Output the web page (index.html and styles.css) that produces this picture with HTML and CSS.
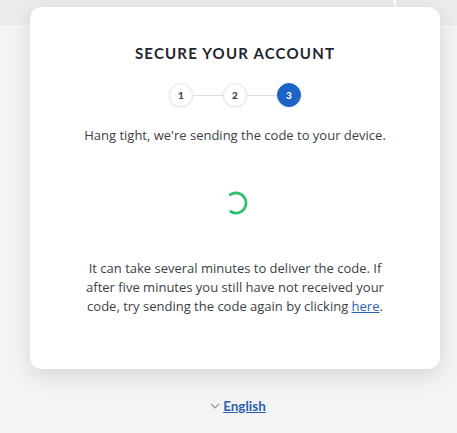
FILE: index.html
```html
<!DOCTYPE html>
<html lang="en">
<head>
<meta charset="utf-8">
<title>Secure your account</title>
<link rel="stylesheet" href="styles.css">
</head>
<body>
<main class="page">
  <section class="card">
    <h1 class="title">SECURE YOUR ACCOUNT</h1>
    <ol class="steps">
      <li class="step">1</li>
      <li class="line"></li>
      <li class="step">2</li>
      <li class="line"></li>
      <li class="step active">3</li>
    </ol>
    <p class="lead">Hang tight, we're sending the code to your device.</p>
    <div class="spinner">
      <svg width="26" height="26" viewBox="0 0 26 26">
        <circle cx="13" cy="13" r="10" fill="none" stroke="#2fbf6f" stroke-width="2.8" stroke-linecap="round" stroke-dasharray="42.6 100" transform="rotate(-124 13 13)"/>
      </svg>
    </div>
    <p class="note">It can take several minutes to deliver the code. If after five minutes you still have not received your code, try sending the code again by clicking <a href="#" class="link">here</a>.</p>
  </section>
  <div class="lang">
    <svg class="chev" width="10" height="6" viewBox="0 0 10 6"><path d="M1 1 L5 5 L9 1" fill="none" stroke="#9a9a9a" stroke-width="1.2"/></svg>
    <a href="#" class="lang-link">English</a>
  </div>
</main>
</body>
</html>
```

FILE: styles.css
```css
html, body {
  margin: 0;
  padding: 0;
}
body {
  width: 457px;
  height: 433px;
  overflow: hidden;
  background:
    linear-gradient(#ffffff, #ffffff) 394px 0 / 2px 25px no-repeat,
    linear-gradient(#ececec, #ececec) 0 0 / 100% 25px no-repeat,
    #f4f4f4;
  font-family: "Open Sans", "Liberation Sans", sans-serif;
}
.page {
  display: flex;
  flex-direction: column;
  align-items: center;
}
.card {
  margin-top: 7px;
  margin-left: 13px;
  width: 410px;
  box-sizing: border-box;
  padding: 35px 20px 53px;
  background: #ffffff;
  border-radius: 12px;
  box-shadow: 0 6px 22px rgba(0, 0, 0, 0.13);
  display: flex;
  flex-direction: column;
  align-items: center;
}
.title {
  margin: 0;
  font-family: "Lato", "Liberation Sans", sans-serif;
  font-weight: 700;
  font-size: 15px;
  line-height: 22px;
  letter-spacing: 1.2px;
  color: #1f2631;
}
.steps {
  list-style: none;
  margin: 19px 0 0;
  padding: 0;
  display: flex;
  align-items: center;
}
.step {
  width: 22px;
  height: 22px;
  border-radius: 50%;
  background: #fff;
  border: 1px solid #e6e6e6;
  box-shadow: 0 1px 3px rgba(0,0,0,0.08);
  display: flex;
  align-items: center;
  justify-content: center;
  font-family: "Lato", "Liberation Sans", sans-serif;
  font-weight: 900;
  font-size: 10px;
  color: #444;
}
.step.active {
  background: #1e64c8;
  border-color: #1e64c8;
  color: #fff;
}
.line {
  width: 30px;
  height: 1px;
  background: #dedede;
}
.lead {
  margin: 18px 0 0;
  font-size: 13px;
  line-height: 20px;
  color: #3c3f44;
  text-align: center;
}
.spinner {
  margin-top: 45px;
  width: 26px;
  height: 26px;
  margin-left: 2px;
}
.spinner svg {
  display: block;
}
.note {
  margin: 43px 0 0;
  width: 310px;
  font-size: 13px;
  line-height: 19px;
  color: #3c3f44;
  text-align: center;
}
.link {
  color: #2b5fb0;
  text-decoration: underline;
}
.lang {
  margin-top: 28px;
  margin-left: 19px;
  display: flex;
  align-items: center;
  gap: 3px;
  line-height: 18px;
}
.chev {
  display: block;
}
.lang-link {
  font-family: "Lato", "Liberation Sans", sans-serif;
  font-weight: 700;
  font-size: 13.5px;
  color: #2b5fb0;
  text-decoration: underline;
}
```
